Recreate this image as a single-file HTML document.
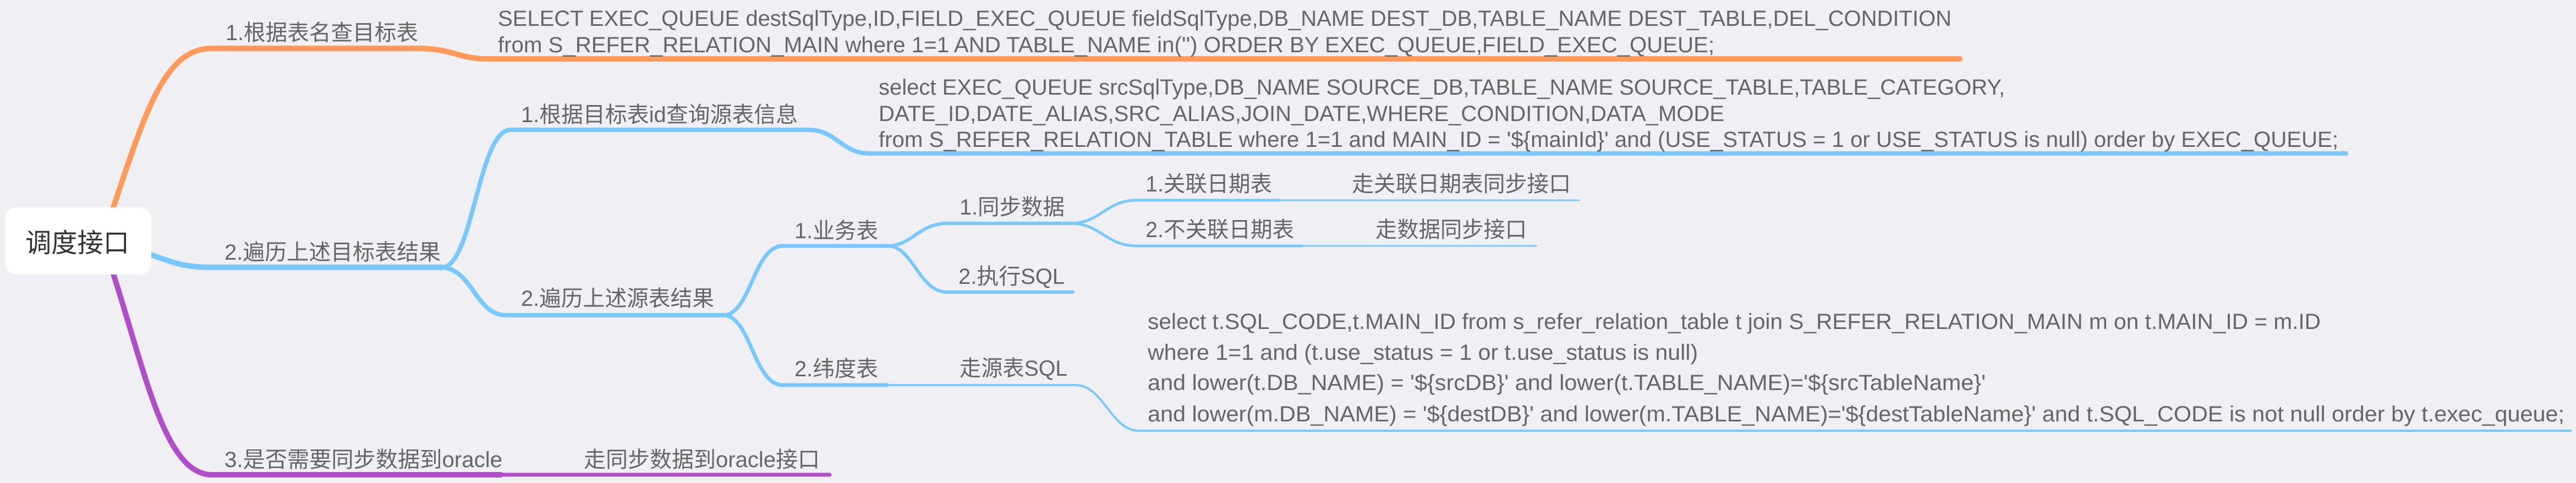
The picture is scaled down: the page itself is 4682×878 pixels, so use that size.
<!DOCTYPE html>
<html><head><meta charset="utf-8">
<style>
html,body{margin:0;padding:0;background:#efeff4;}
svg{display:block;}
text{font-family:"Liberation Sans","Noto Sans CJK SC",sans-serif;fill:#666;font-size:40px;}
</style></head><body>
<svg width="4682" height="878" viewBox="0 0 4682 878" xmlns="http://www.w3.org/2000/svg">
<rect width="4682" height="878" fill="#efeff4"/>
<g fill="none" stroke-linecap="round">
<!-- orange -->
<path d="M205 380 C 265 200, 300 88, 385 88 L 760 88 C 820 88, 835 107, 885 107 L 3562 107" stroke="#ff9a5a" stroke-width="10"/>
<!-- purple -->
<path d="M205 495 C 265 680, 300 863, 385 863 L 910 863" stroke="#b04dc8" stroke-width="10"/>
<path d="M905 863 L 1508 863" stroke="#b04dc8" stroke-width="7"/>
<!-- blue main -->
<path d="M272 462 C 320 480, 340 486, 385 486 L 805 486" stroke="#78c8fc" stroke-width="10"/>
<path d="M805 486 C 860 480, 870 236, 928 236 L 1470 236 C 1520 236, 1530 279, 1580 279 L 4264 279" stroke="#78c8fc" stroke-width="8"/>
<path d="M805 486 C 860 492, 865 573, 920 573 L 1316 573" stroke="#78c8fc" stroke-width="8"/>
<path d="M1316 573 C 1365 570, 1370 447, 1423 447 L 1615 447" stroke="#78c8fc" stroke-width="7"/>
<path d="M1316 573 C 1365 576, 1370 700, 1423 700 L 1612 700" stroke="#78c8fc" stroke-width="7"/>
<path d="M1612 700 L 1955 700 C 2005 700, 2020 783, 2069 783 L 4672 783" stroke="#78c8fc" stroke-width="4"/>
<path d="M1615 447 C 1660 445, 1670 406, 1722 406 L 1950 406" stroke="#78c8fc" stroke-width="6"/>
<path d="M1615 447 C 1660 449, 1670 531, 1722 531 L 1950 531" stroke="#78c8fc" stroke-width="6"/>
<path d="M1950 406 C 2000 404, 2012 364, 2065 364 L 2325 364" stroke="#78c8fc" stroke-width="5"/>
<path d="M2325 364 L 2870 364" stroke="#78c8fc" stroke-width="3"/>
<path d="M1950 406 C 2000 408, 2012 447, 2065 447 L 2366 447" stroke="#78c8fc" stroke-width="5"/>
<path d="M2366 447 L 2792 447" stroke="#78c8fc" stroke-width="3"/>
</g>
<!-- root -->
<rect x="9" y="377" width="266" height="122" rx="20" fill="#ffffff"/>
<text x="46" y="458" style="font-size:48px;fill:#333" textLength="189" lengthAdjust="spacingAndGlyphs">调度接口</text>

<!-- labels -->
<text x="410" y="73" textLength="350" lengthAdjust="spacingAndGlyphs">1.根据表名查目标表</text>
<text x="408" y="472" textLength="393" lengthAdjust="spacingAndGlyphs">2.遍历上述目标表结果</text>
<text x="408" y="849" textLength="505" lengthAdjust="spacingAndGlyphs">3.是否需要同步数据到oracle</text>
<text x="1061" y="849" textLength="429" lengthAdjust="spacingAndGlyphs">走同步数据到oracle接口</text>
<text x="947" y="222" textLength="503" lengthAdjust="spacingAndGlyphs">1.根据目标表id查询源表信息</text>
<text x="947" y="556" textLength="351" lengthAdjust="spacingAndGlyphs">2.遍历上述源表结果</text>
<text x="1444" y="433" textLength="152" lengthAdjust="spacingAndGlyphs">1.业务表</text>
<text x="1444" y="684" textLength="152" lengthAdjust="spacingAndGlyphs">2.纬度表</text>
<text x="1744" y="390" textLength="191" lengthAdjust="spacingAndGlyphs">1.同步数据</text>
<text x="1742" y="516" textLength="193" lengthAdjust="spacingAndGlyphs">2.执行SQL</text>
<text x="1744" y="683" textLength="196" lengthAdjust="spacingAndGlyphs">走源表SQL</text>
<text x="2082" y="348" textLength="230" lengthAdjust="spacingAndGlyphs">1.关联日期表</text>
<text x="2457" y="348" textLength="398" lengthAdjust="spacingAndGlyphs">走关联日期表同步接口</text>
<text x="2082" y="431" textLength="270" lengthAdjust="spacingAndGlyphs">2.不关联日期表</text>
<text x="2500" y="431" textLength="275" lengthAdjust="spacingAndGlyphs">走数据同步接口</text>

<!-- SQL 1 -->
<text x="905" y="47" textLength="2642" lengthAdjust="spacingAndGlyphs">SELECT EXEC_QUEUE destSqlType,ID,FIELD_EXEC_QUEUE fieldSqlType,DB_NAME DEST_DB,TABLE_NAME DEST_TABLE,DEL_CONDITION</text>
<text x="905" y="95" textLength="2211" lengthAdjust="spacingAndGlyphs">from S_REFER_RELATION_MAIN where 1=1 AND TABLE_NAME in('')  ORDER BY EXEC_QUEUE,FIELD_EXEC_QUEUE;</text>

<!-- SQL 2 -->
<text x="1597" y="172" textLength="2047" lengthAdjust="spacingAndGlyphs">select EXEC_QUEUE srcSqlType,DB_NAME SOURCE_DB,TABLE_NAME SOURCE_TABLE,TABLE_CATEGORY,</text>
<text x="1597" y="220" textLength="1537" lengthAdjust="spacingAndGlyphs">DATE_ID,DATE_ALIAS,SRC_ALIAS,JOIN_DATE,WHERE_CONDITION,DATA_MODE</text>
<text x="1597" y="267" textLength="2653" lengthAdjust="spacingAndGlyphs">from S_REFER_RELATION_TABLE  where 1=1 and MAIN_ID = '${mainId}' and (USE_STATUS = 1 or USE_STATUS is null) order by EXEC_QUEUE;</text>

<!-- SQL 3 -->
<text x="2086" y="598" textLength="2132" lengthAdjust="spacingAndGlyphs">select t.SQL_CODE,t.MAIN_ID from s_refer_relation_table t join S_REFER_RELATION_MAIN m on t.MAIN_ID = m.ID</text>
<text x="2086" y="654" textLength="1000" lengthAdjust="spacingAndGlyphs">where 1=1 and (t.use_status = 1 or t.use_status is null)</text>
<text x="2086" y="709" textLength="1523" lengthAdjust="spacingAndGlyphs">and lower(t.DB_NAME) = '${srcDB}' and lower(t.TABLE_NAME)='${srcTableName}'</text>
<text x="2086" y="766" textLength="2575" lengthAdjust="spacingAndGlyphs">and lower(m.DB_NAME) = '${destDB}' and lower(m.TABLE_NAME)='${destTableName}' and t.SQL_CODE is not null order by t.exec_queue;</text>
</svg>
</body></html>
